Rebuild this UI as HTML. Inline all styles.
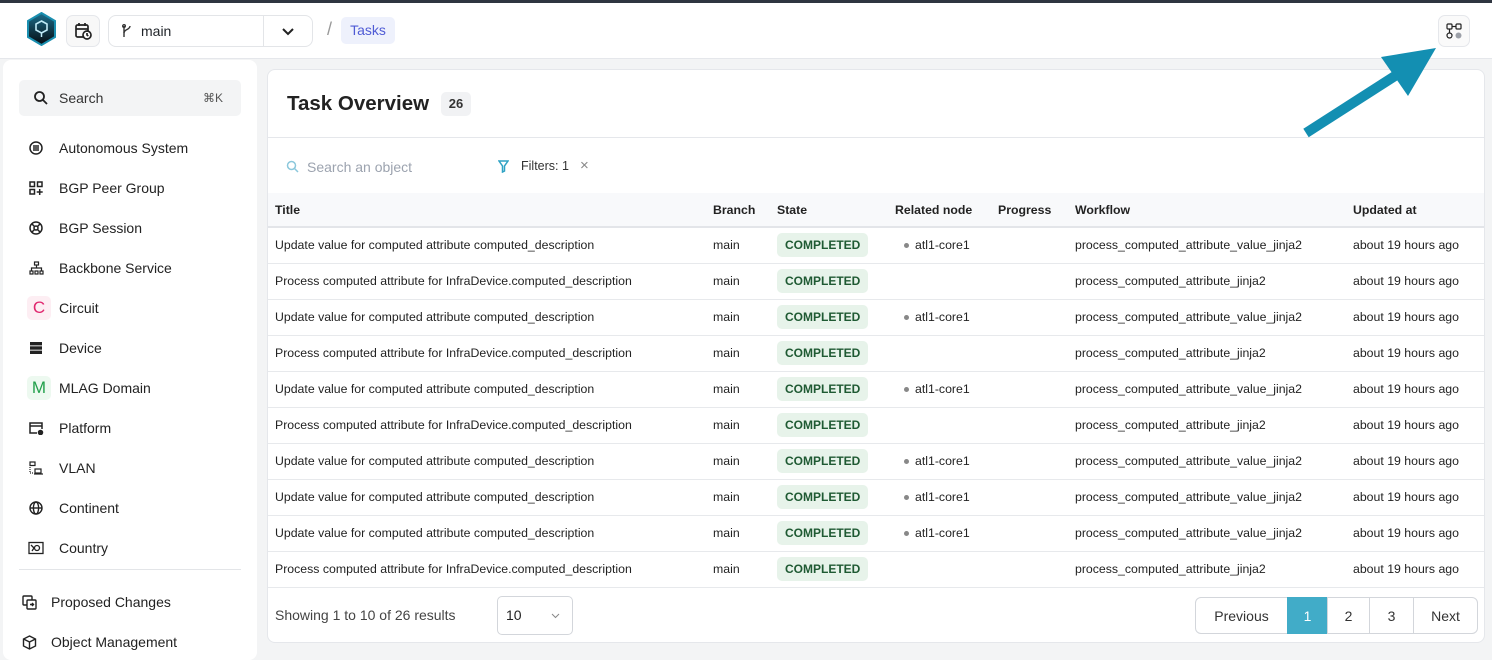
<!DOCTYPE html>
<html><head><meta charset="utf-8"><style>
*{box-sizing:border-box;margin:0;padding:0}
body{width:1492px;height:646px;overflow:hidden;background:#f3f4f5;font-family:"Liberation Sans",sans-serif;color:#1f2328;position:relative}
.top{position:absolute;left:0;top:0;width:1492px;height:3px;background:#2f3540}
.hdr{position:absolute;left:0;top:3px;width:1492px;height:56px;background:#fff;border-bottom:1px solid #e5e7eb}
.abs{position:absolute}
.side{position:absolute;left:3px;top:60px;width:254px;height:600px;background:#fff;border-radius:8px}
.item{position:absolute;left:25px;font-size:14px;color:#222;display:flex;align-items:center}
.item .ic{width:16px;height:16px;margin-right:15px;display:flex;align-items:center;justify-content:center}
.card{position:absolute;left:267px;top:69px;width:1218px;height:574px;background:#fff;border:1px solid #e5e7eb;border-radius:8px;overflow:hidden}
table{position:absolute;left:0;top:123px;width:1218px;border-collapse:collapse;table-layout:fixed;font-size:12.3px}
th{height:34px;background:#f8f9fb;text-align:left;font-weight:bold;color:#222;padding-left:7px;border-bottom:2px solid #e3e5e9;font-size:12.3px}
td{height:36px;padding-left:7px;border-bottom:1px solid #e7e9ec;color:#222;white-space:nowrap}
.badge{display:inline-block;background:#e7f3ea;color:#1f5a33;font-weight:bold;font-size:12px;padding:5px 8px;border-radius:5px}
.dot{display:inline-block;width:5px;height:5px;border-radius:50%;background:#888;margin:0 6px 1px 9px;vertical-align:middle}
.pg{position:absolute;top:527px;height:37px;border:1px solid #d3d6db;display:flex;align-items:center;justify-content:center;font-size:14px;color:#333}
</style></head><body>
<div class="top"></div>
<div class="hdr">
 <svg class="abs" style="left:27px;top:9px" width="29" height="34" viewBox="0 0 29 34"><defs><linearGradient id="g" x1="0" y1="0" x2="0" y2="1"><stop offset="0" stop-color="#1c6e8c"/><stop offset="1" stop-color="#050a10"/></linearGradient></defs><polygon points="14.5,1 28,9 28,25 14.5,33 1,25 1,9" fill="url(#g)" stroke="#1a8fb0" stroke-width="2"/><polygon points="14.5,9 20,12 20,18 14.5,21 9,18 9,12" fill="none" stroke="#bfeaf7" stroke-width="1.6"/><line x1="14.5" y1="21" x2="14.5" y2="25" stroke="#bfeaf7" stroke-width="1.5"/></svg>
 <div class="abs" style="left:66px;top:12px;width:34px;height:32px;border:1px solid #e5e7eb;border-radius:7px;background:#f8f8f8"></div>
 <svg class="abs" style="left:74px;top:19px" width="18" height="18" viewBox="0 0 18 18" fill="none" stroke="#222" stroke-width="1.7"><rect x="2" y="3" width="12" height="12" rx="1.5"/><line x1="5" y1="1" x2="5" y2="4"/><line x1="11" y1="1" x2="11" y2="4"/><line x1="2" y1="7" x2="14" y2="7"/><circle cx="13" cy="13" r="4" fill="#fff"/><path d="M13 11v2l1.3 1"/></svg>
 <div class="abs" style="left:108px;top:12px;width:205px;height:32px;border:1px solid #e3e5e8;border-radius:8px"></div>
 <div class="abs" style="left:263px;top:12px;width:1px;height:32px;background:#e3e5e8"></div>
 <svg class="abs" style="left:121px;top:21px" width="12" height="14" viewBox="0 0 12 14" fill="none" stroke="#333" stroke-width="1.4"><line x1="3" y1="2" x2="3" y2="13"/><circle cx="3" cy="2" r="1.3"/><path d="M9 2c0 4-6 3-6 7"/></svg>
 <div class="abs" style="left:141px;top:20px;font-size:14px">main</div>
 <svg class="abs" style="left:281px;top:24px" width="14" height="9" viewBox="0 0 14 9"><path d="M2 2l5 5 5-5" fill="none" stroke="#222" stroke-width="2"/></svg>
 <div class="abs" style="left:327px;top:16px;font-size:18px;color:#999">/</div>
 <div class="abs" style="left:341px;top:14px;width:54px;height:27px;background:#eef1fc;border-radius:5px;color:#4f5bd5;font-size:14px;line-height:27px;text-align:center">Tasks</div>
 <div class="abs" style="left:1438px;top:12px;width:32px;height:32px;border:1px solid #e5e7eb;border-radius:7px;background:#fafafa"></div>
 <svg class="abs" style="left:1445px;top:19px" width="18" height="18" viewBox="0 0 18 18" fill="none" stroke="#222" stroke-width="1.2"><rect x="2" y="2" width="5" height="5" rx="1"/><rect x="11" y="2" width="5" height="5" rx="1"/><line x1="7" y1="4.5" x2="11" y2="4.5"/><line x1="4.5" y1="7" x2="4.5" y2="11"/><circle cx="4.5" cy="13.5" r="2.5"/><circle cx="13.5" cy="13.5" r="3" fill="#9ca0a8" stroke="none"/></svg>
</div>
<div class="side">
 <div class="abs" style="left:16px;top:20px;width:222px;height:36px;background:#f3f4f5;border-radius:5px"></div>
 <svg class="abs" style="left:30px;top:30px" width="16" height="16" viewBox="0 0 16 16" fill="none" stroke="#222" stroke-width="1.8"><circle cx="6.5" cy="6.5" r="4.5"/><line x1="10" y1="10" x2="14" y2="14"/></svg>
 <div class="abs" style="left:56px;top:30px;font-size:14px;color:#333">Search</div>
 <div class="abs" style="left:200px;top:31px;font-size:12px;color:#555">⌘K</div>
 <div class="item" style="top:80px"><span class="ic"><svg width="14" height="14" viewBox="0 0 14 14" fill="none" stroke="#222" stroke-width="1.5"><circle cx="7" cy="7" r="6"/><line x1="4" y1="5" x2="10" y2="5"/><line x1="4" y1="7" x2="10" y2="7"/><line x1="4" y1="9" x2="10" y2="9"/></svg></span>Autonomous System</div>
 <div class="item" style="top:120px"><span class="ic"><svg width="14" height="14" viewBox="0 0 14 14" fill="none" stroke="#222" stroke-width="1.5"><rect x="1" y="1" width="4.5" height="4.5"/><rect x="8.5" y="1" width="4.5" height="4.5"/><rect x="1" y="8.5" width="4.5" height="4.5"/><path d="M10.7 8v6M7.7 11h6"/></svg></span>BGP Peer Group</div>
 <div class="item" style="top:160px"><span class="ic"><svg width="14" height="14" viewBox="0 0 14 14" fill="none" stroke="#222" stroke-width="1.5"><circle cx="7" cy="7" r="6"/><circle cx="7" cy="7" r="2"/><path d="M3 3l2.5 2.5M11 3L8.5 5.5M3 11l2.5-2.5M11 11L8.5 8.5"/></svg></span>BGP Session</div>
 <div class="item" style="top:200px"><span class="ic"><svg width="15" height="14" viewBox="0 0 15 14" fill="none" stroke="#222" stroke-width="1.2"><rect x="5.5" y="1" width="4" height="3"/><rect x="1" y="10" width="3" height="3"/><rect x="6" y="10" width="3" height="3"/><rect x="11" y="10" width="3" height="3"/><path d="M7.5 4v3M2.5 10V7h10v3"/></svg></span>Backbone Service</div>
 <div class="abs" style="left:24px;top:236px;width:24px;height:24px;background:#fdeef3;border-radius:5px;color:#e0266e;font-size:17px;text-align:center;line-height:24px">C</div>
 <div class="item" style="top:240px;left:56px">Circuit</div>
 <div class="item" style="top:280px"><span class="ic"><svg width="14" height="14" viewBox="0 0 14 14"><rect x="1" y="1" width="12" height="3.4" fill="#222"/><rect x="1" y="5.3" width="12" height="3.4" fill="#222"/><rect x="1" y="9.6" width="12" height="3.4" fill="#222"/></svg></span>Device</div>
 <div class="abs" style="left:24px;top:316px;width:24px;height:24px;background:#edf9f0;border-radius:5px;color:#22a04b;font-size:17px;text-align:center;line-height:24px">M</div>
 <div class="item" style="top:320px;left:56px">MLAG Domain</div>
 <div class="item" style="top:360px"><span class="ic"><svg width="16" height="14" viewBox="0 0 16 14" fill="none" stroke="#222" stroke-width="1.5"><path d="M9 12H2V2h12v6"/><line x1="2" y1="5" x2="14" y2="5"/><circle cx="12.5" cy="11.5" r="2" fill="#222"/></svg></span>Platform</div>
 <div class="item" style="top:400px"><span class="ic"><svg width="16" height="14" viewBox="0 0 16 14" fill="none" stroke="#222" stroke-width="1.2"><rect x="2" y="1" width="5" height="3.5"/><rect x="7" y="8" width="6" height="4"/><path d="M2 6v6h4" stroke-dasharray="1 1"/><line x1="6" y1="13" x2="15" y2="13"/></svg></span>VLAN</div>
 <div class="item" style="top:440px"><span class="ic"><svg width="14" height="14" viewBox="0 0 14 14" fill="none" stroke="#222" stroke-width="1.4"><circle cx="7" cy="7" r="6"/><ellipse cx="7" cy="7" rx="2.6" ry="6"/><line x1="1" y1="7" x2="13" y2="7"/></svg></span>Continent</div>
 <div class="item" style="top:480px"><span class="ic"><svg width="16" height="14" viewBox="0 0 16 14" fill="none" stroke="#222" stroke-width="1.3"><rect x="1" y="1.5" width="14" height="11"/><circle cx="9" cy="7" r="2.5"/><path d="M3 4l3 3-2 3"/></svg></span>Country</div>
 <div class="abs" style="left:16px;top:509px;width:222px;height:1px;background:#e3e5e8"></div>
 <div class="item" style="top:534px;left:18px"><span class="ic" style="margin-right:14px"><svg width="15" height="15" viewBox="0 0 15 15" fill="none" stroke="#222" stroke-width="1.4"><rect x="1" y="1" width="9" height="9" rx="1"/><rect x="5" y="5" width="9" height="9" rx="1" fill="#fff"/><path d="M8 9.5h3.5M10 8l1.5 1.5L10 11"/></svg></span>Proposed Changes</div>
 <div class="item" style="top:574px;left:18px"><span class="ic" style="margin-right:14px"><svg width="15" height="15" viewBox="0 0 15 15" fill="none" stroke="#222" stroke-width="1.4"><path d="M7.5 1l6 3v7l-6 3-6-3V4z"/><path d="M1.5 4l6 3 6-3M7.5 7v7"/></svg></span>Object Management</div>
</div>
<div class="card">
 <div class="abs" style="left:19px;top:22px;font-size:20.5px;font-weight:bold;color:#222">Task Overview</div>
 <div class="abs" style="left:173px;top:22px;width:30px;height:24px;background:#f1f2f4;border-radius:5px;font-size:13px;font-weight:bold;text-align:center;line-height:24px;color:#333">26</div>
 <div class="abs" style="left:0;top:67px;width:1218px;height:1px;background:#e5e7eb"></div>
 <svg class="abs" style="left:18px;top:90px" width="14" height="14" viewBox="0 0 14 14" fill="none" stroke="#8cc8dc" stroke-width="1.5"><circle cx="5.5" cy="5.5" r="4"/><line x1="8.5" y1="8.5" x2="12" y2="12"/></svg>
 <div class="abs" style="left:39px;top:89px;font-size:14px;color:#9ca3af">Search an object</div>
 <svg class="abs" style="left:230px;top:90px" width="11" height="13" viewBox="0 0 11 13"><path d="M1 1h9L6.5 6v5L4.5 12V6z" fill="none" stroke="#2ea2c4" stroke-width="1.5"/></svg>
 <div class="abs" style="left:253px;top:89px;font-size:12.5px;color:#333">Filters: 1</div>
 <div class="abs" style="left:312px;top:87px;font-size:15px;color:#888">×</div>
 <table>
  <colgroup><col style="width:438px"><col style="width:64px"><col style="width:118px"><col style="width:103px"><col style="width:77px"><col style="width:278px"><col style="width:140px"></colgroup>
  <tr><th>Title</th><th>Branch</th><th>State</th><th>Related node</th><th>Progress</th><th>Workflow</th><th>Updated at</th></tr>
  <tr><td>Update value for computed attribute computed_description</td><td>main</td><td><span class="badge">COMPLETED</span></td><td><span class="dot"></span>atl1-core1</td><td></td><td>process_computed_attribute_value_jinja2</td><td>about 19 hours ago</td></tr>
  <tr><td>Process computed attribute for InfraDevice.computed_description</td><td>main</td><td><span class="badge">COMPLETED</span></td><td></td><td></td><td>process_computed_attribute_jinja2</td><td>about 19 hours ago</td></tr>
  <tr><td>Update value for computed attribute computed_description</td><td>main</td><td><span class="badge">COMPLETED</span></td><td><span class="dot"></span>atl1-core1</td><td></td><td>process_computed_attribute_value_jinja2</td><td>about 19 hours ago</td></tr>
  <tr><td>Process computed attribute for InfraDevice.computed_description</td><td>main</td><td><span class="badge">COMPLETED</span></td><td></td><td></td><td>process_computed_attribute_jinja2</td><td>about 19 hours ago</td></tr>
  <tr><td>Update value for computed attribute computed_description</td><td>main</td><td><span class="badge">COMPLETED</span></td><td><span class="dot"></span>atl1-core1</td><td></td><td>process_computed_attribute_value_jinja2</td><td>about 19 hours ago</td></tr>
  <tr><td>Process computed attribute for InfraDevice.computed_description</td><td>main</td><td><span class="badge">COMPLETED</span></td><td></td><td></td><td>process_computed_attribute_jinja2</td><td>about 19 hours ago</td></tr>
  <tr><td>Update value for computed attribute computed_description</td><td>main</td><td><span class="badge">COMPLETED</span></td><td><span class="dot"></span>atl1-core1</td><td></td><td>process_computed_attribute_value_jinja2</td><td>about 19 hours ago</td></tr>
  <tr><td>Update value for computed attribute computed_description</td><td>main</td><td><span class="badge">COMPLETED</span></td><td><span class="dot"></span>atl1-core1</td><td></td><td>process_computed_attribute_value_jinja2</td><td>about 19 hours ago</td></tr>
  <tr><td>Update value for computed attribute computed_description</td><td>main</td><td><span class="badge">COMPLETED</span></td><td><span class="dot"></span>atl1-core1</td><td></td><td>process_computed_attribute_value_jinja2</td><td>about 19 hours ago</td></tr>
  <tr><td>Process computed attribute for InfraDevice.computed_description</td><td>main</td><td><span class="badge">COMPLETED</span></td><td></td><td></td><td>process_computed_attribute_jinja2</td><td>about 19 hours ago</td></tr>
 </table>
 <div class="abs" style="left:7px;top:537px;font-size:14px;color:#444">Showing 1 to 10 of 26 results</div>
 <div class="abs" style="left:229px;top:526px;width:76px;height:39px;border:1px solid #d3d6db;border-radius:5px"></div>
 <div class="abs" style="left:238px;top:537px;font-size:14px;color:#222">10</div>
 <svg class="abs" style="left:283px;top:543px" width="9" height="6" viewBox="0 0 9 6"><path d="M1 1l3.5 3.5L8 1" fill="none" stroke="#888" stroke-width="1"/></svg>
 <div class="pg" style="left:927px;width:93px;border-radius:6px 0 0 6px">Previous</div>
 <div class="pg" style="left:1019px;width:41px;background:#41acc8;color:#fff;border-color:#41acc8">1</div>
 <div class="pg" style="left:1059px;width:43px">2</div>
 <div class="pg" style="left:1101px;width:45px">3</div>
 <div class="pg" style="left:1145px;width:65px;border-radius:0 6px 6px 0">Next</div>
</div>
<svg class="abs" style="left:0;top:0" width="1492" height="646"><line x1="1306" y1="133" x2="1398" y2="74" stroke="#138fb2" stroke-width="10"/><polygon points="1381,57 1436,48 1408,96" fill="#138fb2"/></svg>
</body></html>
